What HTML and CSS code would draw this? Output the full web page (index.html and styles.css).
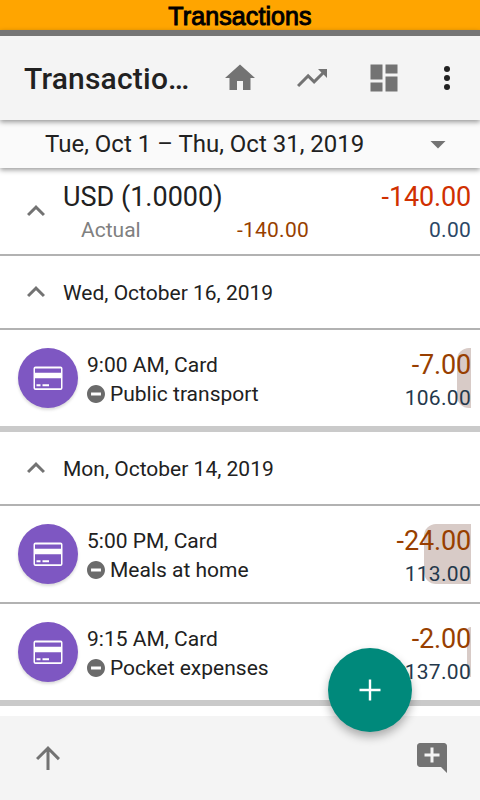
FILE: index.html
```html
<!DOCTYPE html>
<html lang="en">
<head>
<meta charset="utf-8">
<title>Transactions</title>
<link rel="stylesheet" href="styles.css">
</head>
<body>
<svg class="defs" width="0" height="0">
  <symbol id="up" viewBox="0 0 24 24"><path d="M12 8l-6 6 1.41 1.41L12 10.83l4.59 4.58L18 14z"/></symbol>
  <symbol id="card" viewBox="0 0 36 36"><path d="M5.500 6.500h25a2 2 0 0 1 2 2v19.500a2 2 0 0 1-2 2h-25a2 2 0 0 1-2-2V8.500a2 2 0 0 1 2-2zM5 8.500v4.200h26V8.500zM5 18.300v10h26v-10zM6.500 24.200h4v2h-4zM12.500 24.200h6.500v2h-6.500z" fill-rule="evenodd"/></symbol>
  <symbol id="minus" viewBox="0 0 24 24"><path d="M12 2C6.480 2 2 6.480 2 12s4.480 10 10 10 10-4.480 10-10S17.520 2 12 2zm5.500 11.700h-11v-3.400h11z"/></symbol>
</svg>
<div class="caption">Transactions</div>
<header class="toolbar">
  <h1>Transactio…</h1>
  <svg class="icon" viewBox="0 0 24 24"><path d="M10 20v-6h4v6h5v-8h3L12 3 2 12h3v8z"/></svg>
  <svg class="icon" viewBox="0 0 24 24"><path d="M16 6l2.290 2.290-4.880 4.880-4-4L2 16.590 3.410 18l6-6 4 4 6.300-6.290L22 12V6z"/></svg>
  <svg class="icon" viewBox="0 0 24 24"><path d="M3 13h8V3H3v10zm0 8h8v-6H3v6zm10 0h8V11h-8v10zm0-18v6h8V3h-8z"/></svg>
  <svg class="icon more" viewBox="0 0 24 24"><circle cx="12" cy="6" r="2"/><circle cx="12" cy="12" r="2"/><circle cx="12" cy="18" r="2"/></svg>
</header>
<div class="period"><span>Tue, Oct 1 – Thu, Oct 31, 2019</span><svg class="icon" viewBox="0 0 24 24"><path d="M7 10l5 5 5-5z"/></svg></div>
<main>
  <section class="summary">
    <svg class="icon"><use href="#up"/></svg>
    <div class="totals">
      <div class="total"><span>USD (1.0000)</span><span class="negative">-140.00</span></div>
      <div class="actual"><span class="label">Actual</span><span class="spent">-140.00</span><span class="balance">0.00</span></div>
    </div>
  </section>
  <section class="day">
    <h2><svg class="icon"><use href="#up"/></svg><span>Wed, October 16, 2019</span></h2>
    <article class="row">
      <div class="avatar"><svg><use href="#card"/></svg></div>
      <div class="info"><div>9:00 AM, Card</div><div class="category"><svg><use href="#minus"/></svg>Public transport</div></div>
      <div class="amounts bar-s"><div class="amount">-7.00</div><div class="rest">106.00</div></div>
    </article>
  </section>
  <section class="day">
    <h2><svg class="icon"><use href="#up"/></svg><span>Mon, October 14, 2019</span></h2>
    <article class="row">
      <div class="avatar"><svg><use href="#card"/></svg></div>
      <div class="info"><div>5:00 PM, Card</div><div class="category"><svg><use href="#minus"/></svg>Meals at home</div></div>
      <div class="amounts bar-l"><div class="amount">-24.00</div><div class="rest">113.00</div></div>
    </article>
    <article class="row">
      <div class="avatar"><svg><use href="#card"/></svg></div>
      <div class="info"><div>9:15 AM, Card</div><div class="category"><svg><use href="#minus"/></svg>Pocket expenses</div></div>
      <div class="amounts bar-xs"><div class="amount">-2.00</div><div class="rest">137.00</div></div>
    </article>
  </section>
</main>
<footer class="bottom">
  <svg class="icon" viewBox="0 0 24 24"><path d="M4 12l1.410 1.410L11 7.830V20h2V7.830l5.580 5.590L20 12l-8-8z"/></svg>
  <svg class="icon" viewBox="0 0 24 24"><path d="M22 4c0-1.100-.9-2-2-2H4c-1.100 0-2 .9-2 2v12c0 1.100.9 2 2 2h14l4 4V4zm-5 7h-4v4h-2v-4H7V9h4V5h2v4h4v2z"/></svg>
</footer>
<div class="fab"><svg class="icon" viewBox="0 0 24 24"><path d="M19 12.800h-6.200V19h-1.600v-6.200H5v-1.600h6.200V5h1.600v6.200H19z"/></svg></div>
</body>
</html>
```
FILE: styles.css
```css
* { box-sizing: border-box; }
body {
  margin: 0;
  width: 480px;
  height: 800px;
  overflow: hidden;
  position: relative;
  display: flex;
  flex-direction: column;
  background: #fff;
  color: #212121;
  font: 21px/29px Roboto, sans-serif;
}
.defs { position: absolute; }
svg { display: block; flex: none; }
.icon { width: 36px; height: 36px; fill: #737373; }
.caption {
  height: 30px;
  background: #ffa500;
  color: #000;
  text-align: center;
  font: 25px/32px "Liberation Sans", sans-serif;
  letter-spacing: .1px;
  -webkit-text-stroke: 1px #000;
}
.toolbar {
  position: relative;
  z-index: 2;
  height: 90px;
  border-top: 6px solid #757575;
  background: #f4f4f4;
  box-shadow: 0 2px 5px rgba(0, 0, 0, .4);
  display: flex;
  align-items: center;
  padding-left: 24px;
  gap: 36px;
}
.toolbar h1 { margin: 0 -2px 0 0; padding-top: 2px; width: 164px; white-space: nowrap; font-size: 30px; font-weight: 500; line-height: 40px; letter-spacing: .2px; }
.toolbar .more { margin-left: -9px; fill: #212121; }
.period {
  position: relative;
  z-index: 1;
  height: 48px;
  background: #fafafa;
  box-shadow: 0 2px 5px rgba(0, 0, 0, .4);
  display: flex;
  align-items: center;
  justify-content: space-between;
  padding: 0 24px 0 45px;
  font-size: 24px;
}
.summary {
  height: 88px;
  border-bottom: 2px solid #b2b2b2;
  display: flex;
  align-items: center;
  padding: 0 9px 0 18px;
}
.totals { flex: 1; margin-left: 9px; padding-top: 2px; }
.total { display: flex; justify-content: space-between; font-size: 27px; line-height: 36px; }
.negative { color: #d03000; letter-spacing: -.15px; }
.actual { display: grid; grid-template-columns: 18px 100px 128px 1fr; line-height: 30px; }
.label { grid-column: 2; color: #808080; }
.spent { text-align: right; color: #983f00; letter-spacing: .25px; }
.balance { text-align: right; color: #2c4766; letter-spacing: .25px; }
.day { border-bottom: 6px solid #cacaca; }
.day h2 {
  margin: 0;
  height: 72px;
  display: flex;
  align-items: center;
  gap: 9px;
  padding-left: 18px;
  font-size: 21px;
  font-weight: 400;
}
.day h2 span { padding-top: 2px; }
.row { height: 98px; border-top: 2px solid #b2b2b2; display: flex; align-items: center; padding: 0 9px 0 18px; }
.avatar {
  width: 60px;
  height: 60px;
  border-radius: 50%;
  background: #7e57c2;
  box-shadow: 0 2px 3px rgba(0, 0, 0, .15);
  display: grid;
  place-items: center;
}
.avatar svg { width: 36px; height: 36px; fill: #fff; }
.info { flex: 1; margin-left: 9px; padding-top: 4px; }
.category { display: flex; align-items: center; gap: 5px; }
.category svg { width: 18px; height: 18px; margin-bottom: 2px; fill: #6b6b6b; overflow: visible; }
.category svg use { transform: scale(1.2); transform-origin: center; }
.amounts { height: 60px; text-align: right; }
.amount { font-size: 27px; line-height: 35px; color: #983f00; letter-spacing: -.15px; }
.rest { color: #24384b; line-height: 30px; letter-spacing: .3px; }
.bar-s, .bar-l, .bar-xs { position: relative; z-index: 0; }
.bar-s::before, .bar-l::before, .bar-xs::before {
  content: "";
  position: absolute;
  z-index: -1;
  right: 0;
  top: 0;
  height: 60px;
  width: 14px;
  background: #d8cbc7;
  border-radius: 12px 0 0 12px;
}
.bar-l::before { width: 47px; }
.bar-xs::before { width: 4px; top: 5px; height: 50px; border-radius: 4px 0 0 4px; }
.bottom {
  margin-top: auto;
  height: 84px;
  background: #f4f4f4;
  display: flex;
  align-items: center;
  justify-content: space-between;
  padding: 0 30px;
}
.fab {
  position: absolute;
  z-index: 3;
  left: 328px;
  top: 648px;
  width: 84px;
  height: 84px;
  border-radius: 50%;
  background: #00897b;
  box-shadow: 0 5px 10px rgba(0, 0, 0, .3);
  display: grid;
  place-items: center;
}
.fab .icon { fill: #fff; }
```
